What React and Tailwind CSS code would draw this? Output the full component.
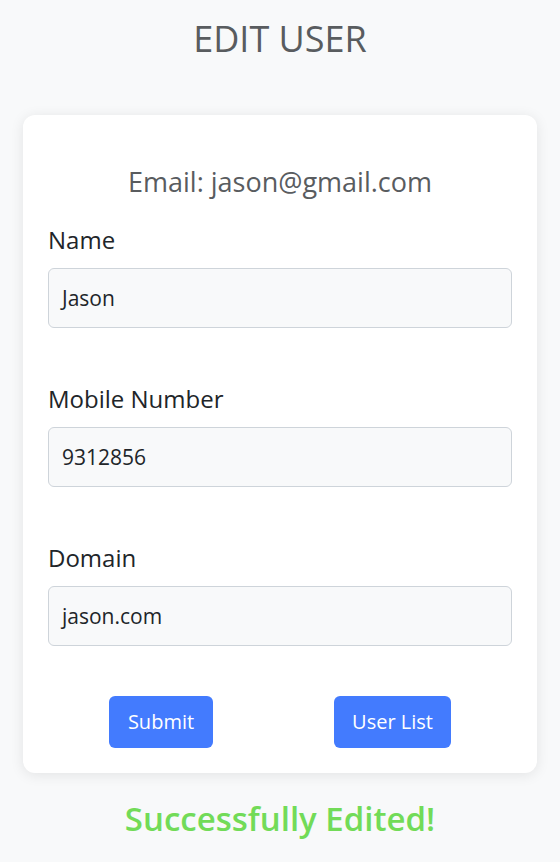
export default function App() {
  const fields = [
    { label: "Name", value: "Jason" },
    { label: "Mobile Number", value: "9312856" },
    { label: "Domain", value: "jason.com" },
  ];
  return (
    <div
      className="min-h-[862px] w-[560px] bg-[#f8f9fa] flex flex-col items-center"
      style={{ fontFamily: '"Open Sans", "Noto Sans", sans-serif' }}
    >
      <h1 className="mt-[14px] h-[50px] text-[36px] leading-[50px] text-[#595c5f] font-normal">EDIT USER</h1>
      <div className="mt-[51px] w-[514px] h-[658px] bg-white rounded-[12px] shadow-[0_2px_14px_rgba(0,0,0,0.09)] px-[25px] pt-[50px]">
        <h3 className="text-center text-[27px] leading-[34px] text-[#595c5f]">Email: jason@gmail.com</h3>
        <div className="mt-[24px] flex flex-col gap-[54px]">
          {fields.map((f) => (
            <div key={f.label} className="flex flex-col">
              <label className="text-[24px] leading-[34px] text-[#212529] mb-[11px]">{f.label}</label>
              <div className="h-[60px] rounded-[6px] border border-[#ced4da] bg-[#f8f9fa] flex items-center px-[13px] pt-[2px] text-[21px] text-[#212529]">
                {f.value}
              </div>
            </div>
          ))}
        </div>
        <div className="mt-[50px] flex pl-[61px] gap-[121px]">
          <button className="h-[52px] w-[104px] rounded-[6px] bg-[#437bfe] text-white text-[20px]">Submit</button>
          <button className="h-[52px] w-[117px] rounded-[6px] bg-[#437bfe] text-white text-[20px]">User List</button>
        </div>
      </div>
      <div className="mt-[24px] text-[33px] leading-[44px] font-semibold text-[#72db58]">Successfully Edited!</div>
    </div>
  );
}
